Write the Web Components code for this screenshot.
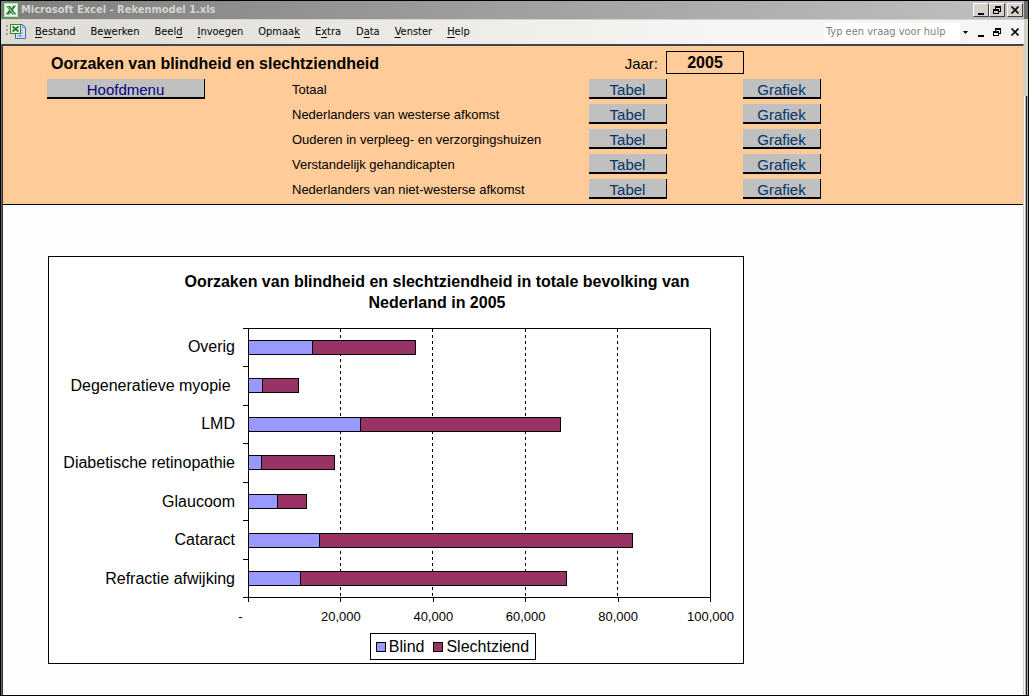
<!DOCTYPE html>
<html lang="nl">
<head>
<meta charset="utf-8">
<title>Microsoft Excel - Rekenmodel 1.xls</title>
<style>
  html, body { margin: 0; height: 100%; }
  body { font-family: "Liberation Sans", Arial, sans-serif; color: #000; background: #fff; }
</style>
</head>
<body>
<excel-window></excel-window>

<template id="t-window">
  <style>
    :host { display: grid; grid-template-columns: minmax(0, 1fr) auto; box-sizing: border-box; min-height: 100vh;
      border: 1px solid #000; background: #fefefe; --ui: "DejaVu Sans Condensed", "Noto Sans", sans-serif; }
    .app { display: flex; flex-direction: column; min-width: 0; }
    .sheet { flex: 1; border-top: 2px solid #45454b; border-left: 1px solid #66666a; border-right: 1px solid #d6d2ca;
      box-shadow: inset 1px 0 0 #333; padding-left: 1px; }
    rekenmodel-chart { margin: 51px 0 24px 45px; }
    .edge { display: flex; flex-direction: column; width: 4px; }
    .edge .caption { height: 18px; background: #6e6e6e; }
    .edge .bar { height: 77px; background: #d6d2ca; }
    .edge .rest { flex: 1; background: linear-gradient(90deg, #fff 0 1px, #aaa 1px 2px, #222 2px 3px, #aaa 3px 4px); }
  </style>
  <div class="app">
    <title-bar>Microsoft Excel - Rekenmodel 1.xls</title-bar>
    <menu-bar></menu-bar>
    <main class="sheet">
      <choice-panel></choice-panel>
      <rekenmodel-chart>Oorzaken van blindheid en slechtziendheid in totale bevolking van Nederland in 2005</rekenmodel-chart>
    </main>
  </div>
  <div class="edge"><div class="caption"></div><div class="bar"></div><div class="rest"></div></div>
</template>

<template id="t-title">
  <style>
    :host { display: flex; align-items: center; gap: 2px; height: 18px; padding: 0 1px 0 2px;
      background: linear-gradient(90deg, #7f7f7f, #c0c0c0); }
    h1 { flex: 1; margin: 0; font: bold 11px/18px var(--ui); color: #d8d4cc; white-space: nowrap; }
    svg { display: block; flex: none; }
  </style>
  <svg width="16" height="16" viewBox="0 0 16 16" aria-hidden="true">
    <rect x=".5" y=".5" width="15" height="15" fill="#f4faf1" stroke="#5c9a52"/>
    <rect x="1.5" y="1.5" width="13" height="13" fill="none" stroke="#c4dfbc"/>
    <path d="M3 4h4l1.500 2L10.500 3.500H13l-3 4.500 3.500 4.500H9L8 10.500 6 12.500H2.500L6 8z" fill="#2c8436"/>
    <path d="M4.500 4.500L11 12" stroke="#c3e4bb" stroke-width="1"/>
  </svg>
  <h1><slot></slot></h1>
  <window-controls raised></window-controls>
</template>

<template id="t-controls">
  <style>
    :host { display: flex; }
    button { box-sizing: border-box; width: 16px; height: 14px; padding: 0; border: 0; background: none; color: #000;
      display: flex; align-items: center; justify-content: center; }
    button:last-child { margin-left: 2px; }
    :host([raised]) button { background: #d6d2ca; border: 1px solid; border-color: #fff #404040 #404040 #fff; }
    svg { display: block; flex: none; }
  </style>
  <button aria-label="Minimaliseren"><svg width="12" height="12" shape-rendering="crispEdges"><path d="M3 9h6v2H3z"/></svg></button>
  <button aria-label="Verkleinen"><svg width="12" height="12" shape-rendering="crispEdges"><path d="M4 2h6v6H8V7h1V4H5v1H4zM2 5h6v5H2zM3 7v2h4V7z" fill-rule="evenodd"/></svg></button>
  <button aria-label="Sluiten"><svg width="12" height="12"><path d="M2.500 2.500l7 7M9.500 2.500l-7 7" stroke="#000" stroke-width="1.700"/></svg></button>
</template>

<template id="t-menu">
  <style>
    :host { display: flex; align-items: center; height: 25px; box-sizing: border-box; border-top: 1px solid #d6d2ca;
      padding: 0 1px 0 4px; background: linear-gradient(90deg, #dedbd5, #f6f5f3 70%); font: 11px/14px var(--ui); }
    .icon { display: block; flex: none; margin-right: 8px; }
    nav { flex: 1; display: flex; gap: 15px; }
    nav button { padding: 0; border: 0; background: none; font: inherit; color: #000; white-space: nowrap; }
    u { text-underline-offset: 2px; }
    .help { display: flex; width: 147px; height: 18px; margin-right: 2px; }
    .help input { flex: 1; min-width: 0; border: 0; padding: 0 2px; background: #fff; font: inherit; }
    .help input::placeholder { color: #808080; opacity: 1; }
    .help button { width: 11px; padding: 0; border: 0; background: #f5f4f2; display: flex; align-items: center; justify-content: center; }
  </style>
  <svg class="icon" width="22" height="18" viewBox="0 0 22 18" aria-hidden="true">
    <path d="M1 2h2v2H1zM1 6h2v2H1zM1 10h2v2H1z" fill="#a5a29b"/>
    <path d="M10.500 1.500h7l3 3v11h-10z" fill="#dbe8fa" stroke="#4069b0"/>
    <path d="M17.500 1.500v3h3M12 7h6M12 10h6M12 13h6M15 5v9" fill="none" stroke="#6f96d4"/>
    <rect x="5.500" y="1.500" width="10" height="9" fill="#eaf5e5" stroke="#37852f"/>
    <path d="M7.500 3.500l6 5M13.500 3.500l-6 5" stroke="#1f7a2b" stroke-width="1.700"/>
  </svg>
  <nav aria-label="Menu">
    <button><u>B</u>estand</button><button>Be<u>w</u>erken</button><button>Beel<u>d</u></button><button><u>I</u>nvoegen</button><button>Opmaa<u>k</u></button><button>E<u>x</u>tra</button><button>D<u>a</u>ta</button><button><u>V</u>enster</button><button><u>H</u>elp</button>
  </nav>
  <div class="help">
    <input type="text" aria-label="Typ een vraag voor hulp" placeholder="Typ een vraag voor hulp">
    <button aria-label="Vragen tonen"><svg width="5" height="3"><path d="M0 0h5L2.500 3z"/></svg></button>
  </div>
  <window-controls></window-controls>
</template>

<template id="t-panel">
  <style>
    :host { display: grid; grid-template-columns: 158px 87px 297px 77px 77px 78px; grid-auto-rows: 25px;
      padding: 4px 0 4px 44px; background: #fc9; border-bottom: 1px solid #000; }
    h2 { grid-column: 1 / 4; margin: 0; padding-left: 4px; font-size: 16px; line-height: 28px; }
    .year { grid-column: 4; text-align: right; padding-right: 8px; font-size: 15px; line-height: 28px; }
    input { grid-column: 5; box-sizing: border-box; width: 78px; height: 23px; margin: 1px 0 0; padding: 1px 0 0;
      border: 1px solid #000; background: none; font: bold 16px/20px "Liberation Sans", Arial, sans-serif; color: #000; text-align: center; }
    .main { grid-column: 1; }
    .name { grid-column: 3; padding-top: 4px; font-size: 13px; line-height: 21px; }
    .table { width: 78px; }
    .graph { grid-column: 6; }
  </style>
  <h2>Oorzaken van blindheid en slechtziendheid</h2>
  <label class="year" for="year">Jaar:</label><input id="year" type="text" value="2005" readonly>
  <sheet-button class="main" style="--ink:#000080">Hoofdmenu</sheet-button>
</template>

<template id="t-button">
  <style>
    :host { display: block; padding-top: 4px; }
    button { display: block; box-sizing: border-box; width: 100%; height: 20px; padding: 2px 0 0; border: 0;
      border-right: 1px solid #000; border-bottom: 2px solid #000; background: #c0c0c0;
      font: 15px/18px "Liberation Sans", Arial, sans-serif; color: var(--ink, #003366); }
  </style>
  <button><slot></slot></button>
</template>

<template id="t-chart">
  <style>
    :host { display: block; box-sizing: border-box; max-width: 696px; border: 1px solid #000; padding: 14px 0 3px; background: #fff; }
    h3 { margin: 0; padding: 0 42px 0 124px; font-size: 16px; line-height: 21px; text-align: center; }
    .body { display: grid; grid-template-columns: 194px 5px minmax(0, 1fr); padding-right: 32px; margin-top: 15px; }
    .names, .ticks, .bars { display: grid; grid-template-rows: repeat(7, 1fr); height: 270px; box-sizing: border-box; }
    .names span { padding-right: 8px; text-align: right; font-size: 16px; align-self: center; white-space: pre; }
    .ticks { border-bottom: 1px solid #000; }
    .ticks i { border-top: 1px solid #000; }
    .plot { display: grid; grid-template-rows: 268px; border: 1px solid #000; height: 270px; box-sizing: border-box; }
    .lines, .bars { grid-area: 1 / 1; }
    .bars { margin: -1px 0; }
    .lines { display: grid; grid-template-columns: repeat(5, 1fr); }
    .lines i:not(:last-child) { background: repeating-linear-gradient(#000 0 3px, transparent 3px 6px) right / 1px 100% no-repeat; }
    .scale { grid-column: 3; display: flex; justify-content: space-between; }
    .scale span { width: 1px; display: flex; flex-direction: column; align-items: center; font-size: 13px; line-height: 20px; white-space: nowrap; }
    .scale span::before { content: ""; width: 1px; height: 4px; background: #000; margin-bottom: 5px; }
    .scale b { font-weight: normal; }
    .scale span:first-child b { padding-right: 16px; }
    footer { display: flex; justify-content: center; padding-left: 114px; margin-top: 6px; }
    .legend { display: flex; align-items: center; gap: 3px; border: 1px solid #000; padding: 0 6px 0 5px; font-size: 16px; line-height: 25px; }
    .legend i { box-sizing: border-box; width: 10px; height: 10px; border: 1px solid #000; background: #99f; }
    .legend i + span { margin-right: 6px; }
    .legend .low { background: #936; }
    .legend .low + span { margin-right: 0; }
  </style>
  <h3><slot></slot></h3>
  <div class="body">
    <div class="names"></div>
    <div class="ticks"><i></i><i></i><i></i><i></i><i></i><i></i><i></i></div>
    <div class="plot">
      <div class="lines"><i></i><i></i><i></i><i></i><i></i></div>
      <div class="bars"></div>
    </div>
    <div class="scale"><span><b>-</b></span><span><b>20,000</b></span><span><b>40,000</b></span><span><b>60,000</b></span><span><b>80,000</b></span><span><b>100,000</b></span></div>
  </div>
  <footer><div class="legend"><i></i><span>Blind</span><i class="low"></i><span>Slechtziend</span></div></footer>
</template>

<template id="t-bar">
  <style>
    :host { display: flex; align-self: center; height: 15px; }
    i { box-sizing: border-box; border: 1px solid #000; border-left: 0; background: #99f; }
    i + i { background: #936; }
  </style>
  <i></i><i></i>
</template>

<script>
  const define = (name, templateId, setup) => customElements.define(name, class extends HTMLElement {
    constructor() {
      super();
      const root = this.attachShadow({ mode: "open" });
      root.append(document.getElementById(templateId).content.cloneNode(true));
    }
    connectedCallback() {
      if (setup && !this.ready) { this.ready = true; setup(this, this.shadowRoot); }
    }
  });

  const add = (parent, tag, className, text) => {
    const el = document.createElement(tag);
    if (className) el.className = className;
    if (text) el.textContent = text;
    parent.append(el);
    return el;
  };

  const groups = ["Totaal", "Nederlanders van westerse afkomst", "Ouderen in verpleeg- en verzorgingshuizen",
    "Verstandelijk gehandicapten", "Nederlanders van niet-westerse afkomst"];

  // Name, number blind, number with low vision
  const causes = [
    ["Overig", 13900, 22400],
    ["Degeneratieve myopie ", 3000, 7800],
    ["LMD", 24400, 43300],
    ["Diabetische retinopathie", 2800, 15800],
    ["Glaucoom", 6200, 6300],
    ["Cataract", 15500, 67800],
    ["Refractie afwijking", 11200, 57800]
  ];
  const axisMax = 100000;

  define("window-controls", "t-controls");
  define("title-bar", "t-title");
  define("menu-bar", "t-menu");
  define("sheet-button", "t-button");
  define("value-bar", "t-bar", (host, root) => {
    root.querySelectorAll("i").forEach((part, n) => {
      part.style.width = host.getAttribute(n ? "low" : "blind") / axisMax * 100 + "%";
    });
  });
  define("choice-panel", "t-panel", (host, root) => {
    for (const group of groups) {
      add(root, "div", "name", group);
      add(root, "sheet-button", "table", "Tabel");
      add(root, "sheet-button", "graph", "Grafiek");
    }
  });
  define("rekenmodel-chart", "t-chart", (host, root) => {
    for (const [name, blind, low] of causes) {
      add(root.querySelector(".names"), "span", "", name);
      const bar = document.createElement("value-bar");
      bar.setAttribute("blind", blind);
      bar.setAttribute("low", low);
      root.querySelector(".bars").append(bar);
    }
  });
  define("excel-window", "t-window");
</script>
</body>
</html>
